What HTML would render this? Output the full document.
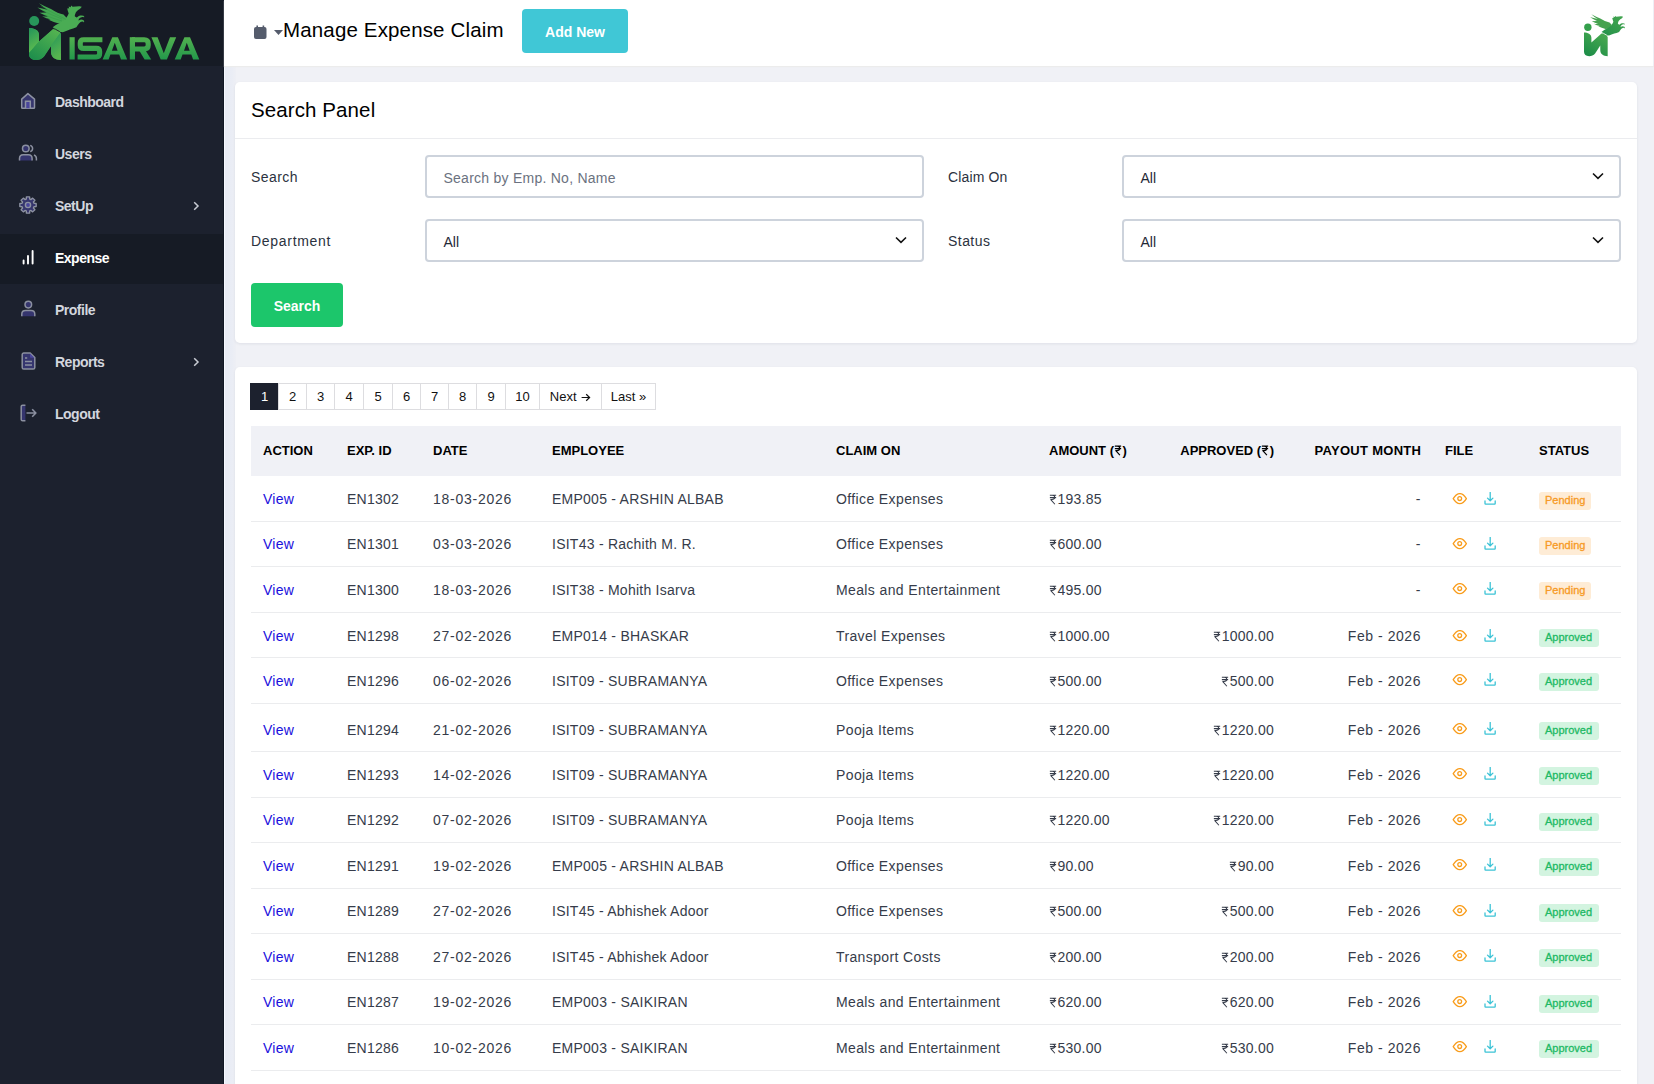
<!DOCTYPE html>
<html><head><meta charset="utf-8">
<style>
*{margin:0;padding:0;box-sizing:border-box}
html,body{width:1654px;height:1084px;overflow:hidden}
body{font-family:"Liberation Sans",sans-serif;background:#f0f1f6;position:relative;color:#374151}
.abs{position:absolute}
#side{position:absolute;left:0;top:0;width:224px;height:1084px;background:#1c212e}
#side .logo{position:absolute;left:0;top:0;width:224px;height:66px;background:#161b25}
#side .edge{position:absolute;left:223px;top:0;width:1px;height:1084px;background:#111724}
#wl{position:absolute;left:224px;top:0;width:1px;height:1084px;background:#f5f8fe}
#lg{position:absolute;left:225px;top:66px;width:11px;height:1018px;background:linear-gradient(90deg,#e8ebf5,#eaedf5 60%,#eeeff5)}
.mi{position:absolute;left:0;width:223px;height:50px;line-height:48px;color:#d3d6de;font-size:14px;font-weight:bold;letter-spacing:-0.5px}
.mi.act{background:#161b25;color:#fff}
.mi .t{position:absolute;left:55px;top:0}
.mi svg{position:absolute}
.mi .chev{position:absolute;left:192px;top:18px}
#hdr{position:absolute;left:224px;top:0;width:1430px;height:66px;background:#fff;box-shadow:0 1px 1px #ececec}
.card{position:absolute;left:235px;width:1402px;background:#fff;border-radius:5px;box-shadow:0 1px 3px rgba(30,35,60,0.08)}
.lbl{position:absolute;font-size:14px;color:#2b3240;letter-spacing:0.1px}
.inp{position:absolute;width:499px;height:43px;border:2px solid #cdd3dc;border-radius:4px;background:#fff}
.inp .v{position:absolute;left:16.5px;top:0;line-height:42px;font-size:14px;color:#1f2937}
.inp .ph{color:#6b7280;letter-spacing:0.25px}
.inp svg{position:absolute;left:468px;top:15px}
.btn{position:absolute;color:#fff;font-weight:bold;font-size:14px;text-align:center;border-radius:4px}
.pg{position:absolute;left:250px;top:383px;height:27px;display:flex}
.pg span{display:block;height:27px;line-height:25px;font-size:13px;color:#111;text-align:center;border:1px solid #dddde0;border-right:none;background:#fff}
.pg span:last-child{border-right:1px solid #dddde0}
.pg span.on{background:#1c212e;color:#fff;border-color:#1c212e}
#tbl{position:absolute;left:251px;top:426px;width:1370px;height:660px}
.th{position:absolute;left:0;top:0;width:1370px;height:50px;background:#f0f1f6}
.th span{position:absolute;top:0;line-height:50px;font-size:13px;font-weight:bold;color:#000;letter-spacing:0px}
.tr{position:absolute;left:0;width:1370px}
.sep{position:absolute;left:0;width:1370px;height:1px;background:#ebecee}
.tr .c.date{letter-spacing:0.75px}
.tr .c.pay{letter-spacing:0.55px}
.tr .c.claim{letter-spacing:0.38px}
.tr .c{position:absolute;top:0;font-size:14px;color:#363c4a;letter-spacing:0.25px;white-space:nowrap}
.tr .num{letter-spacing:0.25px}
.tr .view{color:#1a10dc}
.tr .r{text-align:right}
.inr{display:inline-block;vertical-align:-1px;margin-right:0.5px}
.ic{position:absolute;top:0;height:100%;display:flex;align-items:center}
.badge{position:absolute;left:1288px;top:50%;margin-top:-7px;height:18px;line-height:17px;padding:0 6px;font-size:11px;border-radius:3px;-webkit-text-stroke:0.3px currentColor}
.pend{background:#feecd6;color:#f79a25;width:52px}
.appr{background:#d3f4e0;color:#1db964;width:60px}
</style></head>
<body>
<div id="side">
  <div class="logo">
    <svg class="abs" style="left:0;top:0" width="224" height="66" viewBox="0 0 224 66">
      <defs>
        <linearGradient id="gS" x1="0" y1="0" x2="0" y2="1"><stop offset="0" stop-color="#3aa652"/><stop offset="1" stop-color="#2f9a4f"/></linearGradient>
        <linearGradient id="gL" x1="0" y1="0" x2="0.3" y2="1"><stop offset="0" stop-color="#22935a"/><stop offset="1" stop-color="#5fbd4f"/></linearGradient>
        <linearGradient id="gD" x1="0.9" y1="0" x2="0.2" y2="1"><stop offset="0" stop-color="#58b651"/><stop offset="1" stop-color="#1f8f4c"/></linearGradient>
        <linearGradient id="gR" x1="0" y1="0" x2="0.3" y2="1"><stop offset="0" stop-color="#22935a"/><stop offset="1" stop-color="#57b54f"/></linearGradient>
        <linearGradient id="gT" gradientUnits="userSpaceOnUse" x1="0" y1="37" x2="0" y2="60"><stop offset="0" stop-color="#52b04f"/><stop offset="1" stop-color="#22984b"/></linearGradient>
        <linearGradient id="gT2" gradientUnits="userSpaceOnUse" x1="0" y1="37" x2="0" y2="60"><stop offset="0" stop-color="#52b04f"/><stop offset="1" stop-color="#22984b"/></linearGradient>
      </defs>
      <g id="mk">
      <circle cx="34.2" cy="21" r="5" fill="#27965a"/>
      <path d="M29 28 C34 28 39 30 39 35 L39 41.5 L51.5 30.5 C53 28.8 54.5 28 56 28 C59 28 61 30.5 61 33.5 L61 60 C55 60 51 57 51 52 L51 45.5 L44 56.5 C42 59 39 60 36 60 C31.5 60 29 57.5 29 54 Z" fill="url(#gS)"/>
      <path d="M29 28 C34 28 39 30 39 35 L39 41.5 L29 53 Z" fill="url(#gL)"/>
      <path d="M29 53 L39 41.5 L51.5 30.5 C53 28.8 54.5 28 56 28 C58.5 28 60.3 29.6 60.9 32 L44 56.5 C42 59 39 60 36 60 C31.5 60 29 57.5 29 54 Z" fill="url(#gD)"/>
      <path d="M60.9 32 L61 60 C55 60 51 57 51 52 L51 45.5 Z" fill="url(#gR)"/>
      <path d="M66.8 18 L63.5 14.6 Q58 13.5 51 9 Q45 6.5 38.9 3.2 Q43 7 47.5 9.8 Q42 8.2 37.4 7.4 Q42 10.5 46.5 12.6 Q43 12.6 39.5 12.7 Q44 15 48 16.4 Q45 16.5 42.1 16.2 Q46.5 18.5 50.5 19.2 Q49.5 19.5 48 19.5 Q53 22 58 23.2 L61 23 Z" fill="#45a952"/>
      <path d="M52.7 27.2 Q56 24.5 60.4 22.4 L66.3 17.7 Q68 15.5 68.7 13.6 Q67.8 11 67.2 8.4 L69.2 8.2 L68.6 6.4 L70.6 7.2 L71.2 5.6 L72.6 6.8 Q74.5 6.4 76 6.4 L79 6.2 Q80.6 6.1 81.8 6.7 L80.6 8.3 Q79.4 9.3 78.1 10 Q76.6 11.2 75.8 12.4 Q74.8 14.5 74.8 16.2 Q75.5 17.2 76.8 17.5 Q78.5 16 80 15.6 Q82 15.3 83.4 15.7 Q84.6 16.3 84.2 17.3 Q83.5 16.8 82.2 16.9 Q80.8 17.2 79.8 18 Q78.5 19.3 78.4 20.6 Q79.8 19.7 81 19.4 Q82.6 19.6 83.6 20.3 Q84.6 21.3 84 22.5 Q83.4 21.7 82.2 21.5 Q80.5 21.8 79.2 23.2 Q77.6 25 76.4 27.2 Q73 28.5 69.9 29.5 Q66 31 62.8 32.2 Q60 31.8 58 30.7 Q55 28.8 52.7 27.2 Z" fill="#4aac54"/>
      <path d="M50.5 27.8 Q55.5 28.6 59.5 31.5 Q61 32.7 61.8 34" fill="none" style="stroke:var(--sep,#161b25)" stroke-width="0.9"/>
      <path d="M41 6 Q50 11.5 60 16.5 Q63.5 18 66 19.5 M42 10.5 Q52 15 62 19 M44 14.8 Q53 18.5 62 21" fill="none" stroke="#2b8a44" stroke-width="0.45" opacity="0.7"/>
    </g>
      <g fill="url(#gT)">
        <rect x="69.5" y="37.2" width="5.2" height="22.3"/>
        <path fill-rule="evenodd" d="M102.6 59.5 L112.3 37.2 H117.9 L127.2 59.5 H121.0 L119.2 54.6 H110.4 L108.6 59.5 Z M111.9 50.8 H117.6 L114.8 42.8 Z"/>
        <rect x="129.8" y="37.2" width="5.2" height="22.3"/>
        <path d="M151.4 37.2 H157.6 L163.8 53.2 L170 37.2 H176.2 L166.9 59.5 H160.7 Z"/>
        <path d="M139.2 50.6 H145.6 L151.2 59.5 H144.6 Z"/>
        <path fill-rule="evenodd" d="M174.7 59.5 L184.4 37.2 H190.0 L199.3 59.5 H193.1 L191.3 54.6 H182.5 L180.7 59.5 Z M184.0 50.8 H189.7 L186.8 42.8 Z"/>
      </g>
      <g fill="none" stroke="url(#gT2)" stroke-width="5.1">
        <path d="M102.4 39.75 H83.6 Q80.25 39.75 80.25 43 V45.2 Q80.25 48.4 83.6 48.4 H96.3 Q99.65 48.4 99.65 51.6 V53.6 Q99.65 56.95 96.3 56.95 H77.6"/>
        <path d="M132 39.75 H144.2 Q148.2 39.75 148.2 43.7 V45.3 Q148.2 49 144.2 49 H132"/>
      </g>
    </svg>
  </div>
  <div class="edge"></div>

  <div class="mi" style="top:78px">
    <svg style="left:19px;top:13px" width="19" height="19" viewBox="0 0 19 19"><path d="M2.7 8.1 L8.9 2.6 L15.5 8.1 V16.5 C15.5 17 15.2 17.3 14.7 17.3 H3.5 C3 17.3 2.7 17 2.7 16.5 Z" fill="#36366d" stroke="#8d92a2" stroke-width="1.5" stroke-linejoin="round"/><path d="M6.5 17.2 V10.3 H11.3 V17.2" fill="#4a469c" stroke="#8d92a2" stroke-width="1.5"/></svg>
    <span class="t">Dashboard</span></div>
  <div class="mi" style="top:130px">
    <svg style="left:18px;top:13px" width="20" height="20" viewBox="0 0 20 20"><circle cx="7.8" cy="5.5" r="3.3" fill="#35356e" stroke="#8b90a0" stroke-width="1.5"/><path d="M12.2 2.4 C13.8 2.9 14.6 4.1 14.6 5.5 C14.6 6.9 13.8 8.1 12.2 8.6" fill="none" stroke="#8b90a0" stroke-width="1.5"/><path d="M1.5 17.4 V15.5 C1.5 13.3 3 11.7 5.2 11.7 H10.4 C12.6 11.7 14.1 13.3 14.1 15.5 V17.4" fill="#35356e" stroke="#8b90a0" stroke-width="1.5"/><path d="M16 12 C17.5 12.6 18.4 14 18.4 15.6 V17.4" fill="none" stroke="#8b90a0" stroke-width="1.5"/></svg>
    <span class="t">Users</span></div>
  <div class="mi" style="top:182px">
    <svg style="left:18px;top:13px" width="20" height="20" viewBox="0 0 20 20"><path d="M15.96 8.29 L18.15 8.42 L18.15 11.58 L15.96 11.71 L15.42 13.01 L16.88 14.64 L14.64 16.88 L13.01 15.42 L11.71 15.96 L11.58 18.15 L8.42 18.15 L8.29 15.96 L6.99 15.42 L5.36 16.88 L3.12 14.64 L4.58 13.01 L4.04 11.71 L1.85 11.58 L1.85 8.42 L4.04 8.29 L4.58 6.99 L3.12 5.36 L5.36 3.12 L6.99 4.58 L8.29 4.04 L8.42 1.85 L11.58 1.85 L11.71 4.04 L13.01 4.58 L14.64 3.12 L16.88 5.36 L15.42 6.99 Z" fill="#36366d" stroke="#8d92a2" stroke-width="1.4" stroke-linejoin="round"/><circle cx="10" cy="10" r="2.6" fill="#4a469c" stroke="#8d92a2" stroke-width="1.4"/></svg>
    <span class="t">SetUp</span>
    <svg class="chev" width="8" height="12" viewBox="0 0 8 12"><path d="M2.2 2.3 L6 6 L2.2 9.7" fill="none" stroke="#c9ccd4" stroke-width="1.5"/></svg></div>
  <div class="mi act" style="top:234px">
    <svg style="left:20px;top:14px" width="18" height="18" viewBox="0 0 18 18"><path d="M3.6 12.4 V15.6 M8 7.9 V15.6 M12.6 3 V15.6" stroke="#fff" stroke-width="1.9" stroke-linecap="round"/></svg>
    <span class="t">Expense</span></div>
  <div class="mi" style="top:286px">
    <svg style="left:19px;top:13px" width="19" height="19" viewBox="0 0 19 19"><circle cx="9.3" cy="5.6" r="3.3" fill="#35356e" stroke="#8b90a0" stroke-width="1.5"/><path d="M2.8 17.3 V15.2 C2.8 13 4.4 11.6 6.6 11.6 H12 C14.2 11.6 15.8 13 15.8 15.2 V17.3" fill="#35356e" stroke="#8b90a0" stroke-width="1.5"/></svg>
    <span class="t">Profile</span></div>
  <div class="mi" style="top:338px">
    <svg style="left:19px;top:13px" width="19" height="20" viewBox="0 0 19 20"><path d="M3.2 3.6 C3.2 2.7 3.9 2 4.8 2 H11.2 L15.8 6.6 V16.4 C15.8 17.3 15.1 18 14.2 18 H4.8 C3.9 18 3.2 17.3 3.2 16.4 Z" fill="#35356e" stroke="#8b90a0" stroke-width="1.5" stroke-linejoin="round"/><path d="M6 7 H8.2 M6 10.6 H13 M6 13.9 H13" stroke="#8b90a0" stroke-width="1.5"/><path d="M11 2.5 L15.3 6.8 H12 C11.4 6.8 11 6.4 11 5.8Z" fill="#4b479e"/></svg>
    <span class="t">Reports</span>
    <svg class="chev" width="8" height="12" viewBox="0 0 8 12"><path d="M2.2 2.3 L6 6 L2.2 9.7" fill="none" stroke="#c9ccd4" stroke-width="1.5"/></svg></div>
  <div class="mi" style="top:390px">
    <svg style="left:19px;top:13px" width="20" height="20" viewBox="0 0 20 20"><path d="M6.4 2.2 H3.6 C2.8 2.2 2.2 2.8 2.2 3.6 V16.4 C2.2 17.2 2.8 17.8 3.6 17.8 H6.4" fill="#35356e" stroke="#8b90a0" stroke-width="1.5"/><path d="M7.5 10 H16.8 M13.2 6.3 L16.9 10 L13.2 13.7" fill="none" stroke="#8b90a0" stroke-width="1.6" stroke-linejoin="round"/></svg>
    <span class="t">Logout</span></div>
</div>

<div id="wl"></div>
<div id="lg"></div>
<div style="position:absolute;left:1653px;top:0;width:1px;height:66px;background:#eeeff5;z-index:5"></div>
<div id="hdr">
  <svg class="abs" style="left:30px;top:25px" width="13" height="14" viewBox="0 0 13 14"><path d="M3.2 0.5 V2.5 M9.4 0.5 V2.5" stroke="#555c6c" stroke-width="1.6"/><rect x="0" y="2" width="12.5" height="12" rx="2" fill="#555c6c"/><rect x="0" y="4.8" width="13" height="0.6" fill="#fff" opacity="0.0"/></svg>
  <svg class="abs" style="left:50px;top:30px" width="9" height="5" viewBox="0 0 9 5"><path d="M0 0 H9 L4.5 5 Z" fill="#555c6c"/></svg>
  <div class="abs" style="left:59px;top:18px;font-size:20.5px;line-height:24px;color:#000;letter-spacing:0.15px">Manage Expense Claim</div>
  <div class="btn" style="left:298px;top:9px;width:106px;height:44px;line-height:46px;background:#40c7d6">Add New</div>
  <svg class="abs" style="left:1330px;top:0" width="100" height="66" viewBox="1554 0 100 66">
    <defs>
      <linearGradient id="gH" x1="0.8" y1="0" x2="0.2" y2="1"><stop offset="0" stop-color="#4aaa50"/><stop offset="1" stop-color="#1d8d48"/></linearGradient>
      <linearGradient id="gP" x1="1" y1="0" x2="0" y2="1"><stop offset="0" stop-color="#45a650"/><stop offset="1" stop-color="#23914a"/></linearGradient>
    </defs>
    <g transform="translate(1584,14) scale(0.74) translate(-29,-3)">
      <circle cx="34.2" cy="21" r="5" fill="#34a04c"/>
      <path d="M29 28 C34 28 39 30 39 35 L39 41.5 L51.5 30.5 C53 28.8 54.5 28 56 28 C59 28 61 30.5 61 33.5 L61 60 C55 60 51 57 51 52 L51 45.5 L44 56.5 C42 59 39 60 36 60 C31.5 60 29 57.5 29 54 Z" fill="url(#gH)"/>
      <path d="M66.8 18 L63.5 14.6 Q58 13.5 51 9 Q45 6.5 38.9 3.2 Q43 7 47.5 9.8 Q42 8.2 37.4 7.4 Q42 10.5 46.5 12.6 Q43 12.6 39.5 12.7 Q44 15 48 16.4 Q45 16.5 42.1 16.2 Q46.5 18.5 50.5 19.2 Q49.5 19.5 48 19.5 Q53 22 58 23.2 L61 23 Z" fill="#45a24f"/>
      <path d="M52.7 27.2 Q56 24.5 60.4 22.4 L66.3 17.7 Q68 15.5 68.7 13.6 Q67.8 11 67.2 8.4 L69.2 8.2 L68.6 6.4 L70.6 7.2 L71.2 5.6 L72.6 6.8 Q74.5 6.4 76 6.4 L79 6.2 Q80.6 6.1 81.8 6.7 L80.6 8.3 Q79.4 9.3 78.1 10 Q76.6 11.2 75.8 12.4 Q74.8 14.5 74.8 16.2 Q75.5 17.2 76.8 17.5 Q78.5 16 80 15.6 Q82 15.3 83.4 15.7 Q84.6 16.3 84.2 17.3 Q83.5 16.8 82.2 16.9 Q80.8 17.2 79.8 18 Q78.5 19.3 78.4 20.6 Q79.8 19.7 81 19.4 Q82.6 19.6 83.6 20.3 Q84.6 21.3 84 22.5 Q83.4 21.7 82.2 21.5 Q80.5 21.8 79.2 23.2 Q77.6 25 76.4 27.2 Q73 28.5 69.9 29.5 Q66 31 62.8 32.2 Q60 31.8 58 30.7 Q55 28.8 52.7 27.2 Z" fill="url(#gP)"/>
      <path d="M50.5 27.8 Q55.5 28.6 59.5 31.5 Q61 32.7 61.8 34" fill="none" stroke="#fff" stroke-width="1.1"/>
    </g></svg>
</div>

<div class="card" style="top:82px;height:261px">
  <div class="abs" style="left:16px;top:16px;font-size:20.5px;line-height:24px;color:#000;letter-spacing:0.1px">Search Panel</div>
  <div class="abs" style="left:0;top:56px;width:1402px;height:1px;background:#ebecef"></div>
</div>
<div class="lbl" style="left:251px;top:169px;letter-spacing:0.45px">Search</div>
<div class="lbl" style="left:251px;top:233px;letter-spacing:0.70px">Department</div>
<div class="lbl" style="left:948px;top:169px;letter-spacing:0.15px">Claim On</div>
<div class="lbl" style="left:948px;top:233px;letter-spacing:0.45px">Status</div>
<div class="inp" style="left:425px;top:155px"><span class="v ph">Search by Emp. No, Name</span></div>
<div class="inp" style="left:425px;top:219px"><span class="v">All</span><svg width="12" height="8" viewBox="0 0 12 8"><path d="M1 1.5 L6 6.3 L11 1.5" fill="none" stroke="#111" stroke-width="1.6"/></svg></div>
<div class="inp" style="left:1122px;top:155px"><span class="v">All</span><svg width="12" height="8" viewBox="0 0 12 8"><path d="M1 1.5 L6 6.3 L11 1.5" fill="none" stroke="#111" stroke-width="1.6"/></svg></div>
<div class="inp" style="left:1122px;top:219px"><span class="v">All</span><svg width="12" height="8" viewBox="0 0 12 8"><path d="M1 1.5 L6 6.3 L11 1.5" fill="none" stroke="#111" stroke-width="1.6"/></svg></div>
<div class="btn" style="left:251px;top:283px;width:92px;height:44px;line-height:46px;background:#1cc66b">Search</div>

<div class="card" style="top:367px;height:760px"></div>
<div class="pg">
  <span class="on" style="width:28px">1</span><span style="width:28px">2</span><span style="width:28px">3</span><span style="width:29px">4</span><span style="width:29px">5</span><span style="width:28px">6</span><span style="width:28px">7</span><span style="width:28px">8</span><span style="width:29px">9</span><span style="width:34px">10</span><span style="width:62px">Next <svg width="10" height="9" viewBox="0 0 10 9" style="vertical-align:-0.5px;margin-left:1px"><path d="M0.6 4.5 H8.6 M5.2 1.2 L8.6 4.5 L5.2 7.8" fill="none" stroke="#111" stroke-width="1.2"/></svg></span><span style="width:55px">Last &#187;</span>
</div>

<div id="tbl">
  <div class="th">
    <span style="left:12px">ACTION</span>
    <span style="left:96px">EXP. ID</span>
    <span style="left:182px">DATE</span>
    <span style="left:301px">EMPLOYEE</span>
    <span style="left:585px">CLAIM ON</span>
    <span style="left:798px">AMOUNT (<svg class="inr" viewBox="0 0 10 14" width="8" height="11"><path d="M1 1.5H9M1 4.6H9M2.2 1.5H4.2C6.6 1.5 7.2 3 7.2 4.2C7.2 5.6 6.2 7.1 3.6 7.1H2.2L7.4 13" fill="none" stroke="currentColor" stroke-width="1.5" stroke-linecap="butt" stroke-linejoin="round"/></svg>)</span>
    <span style="right:347px">APPROVED (<svg class="inr" viewBox="0 0 10 14" width="8" height="11"><path d="M1 1.5H9M1 4.6H9M2.2 1.5H4.2C6.6 1.5 7.2 3 7.2 4.2C7.2 5.6 6.2 7.1 3.6 7.1H2.2L7.4 13" fill="none" stroke="currentColor" stroke-width="1.5" stroke-linecap="butt" stroke-linejoin="round"/></svg>)</span>
    <span style="right:200px;letter-spacing:0.3px;margin-right:-0.3px">PAYOUT MONTH</span>
    <span style="left:194px;left:1194px">FILE</span>
    <span style="left:1288px">STATUS</span>
  </div>
<div class="tr" style="top:50px;height:45px;line-height:47px"><span class="c view" style="left:12px">View</span><span class="c" style="left:96px">EN1302</span><span class="c date" style="left:182px">18-03-2026</span><span class="c" style="left:301px">EMP005 - ARSHIN ALBAB</span><span class="c claim" style="left:585px">Office Expenses</span><span class="c num" style="left:798px"><svg class="inr" viewBox="0 0 10 14" width="8" height="11"><path d="M1 1.5H9M1 4.6H9M2.2 1.5H4.2C6.6 1.5 7.2 3 7.2 4.2C7.2 5.6 6.2 7.1 3.6 7.1H2.2L7.4 13" fill="none" stroke="currentColor" stroke-width="1.3" stroke-linecap="butt" stroke-linejoin="round"/></svg>193.85</span><span class="c r pay" style="right:200px">-</span><span class="ic" style="left:1201px"><svg class="eye" viewBox="0 0.6 16 12" width="16" height="12"><path d="M1.2 6.2 C3.5 2.5 5.6 1.2 7.8 1.2 C10 1.2 12.2 2.5 14.4 6.2 C12.2 9.9 10 11.2 7.8 11.2 C5.6 11.2 3.5 9.9 1.2 6.2 Z" fill="none" stroke="#f99d1c" stroke-width="1.3" stroke-linejoin="round"/><circle cx="7.7" cy="6.2" r="1.9" fill="none" stroke="#f99d1c" stroke-width="1.3"/></svg></span><span class="ic" style="left:1232px"><svg class="dl" viewBox="0 0.7 14 14" width="14" height="14"><path d="M7.2 1 V9.4 M4.5 6.8 L7.2 9.5 L9.9 6.8" fill="none" stroke="#3cc3d6" stroke-width="1.3" stroke-linecap="round" stroke-linejoin="round"/><path d="M2 9.6 V12.2 Q2 12.8 2.6 12.8 H11.6 Q12.2 12.8 12.2 12.2 V9.6" fill="none" stroke="#3cc3d6" stroke-width="1.3" stroke-linecap="round"/></svg></span><span class="badge pend">Pending</span></div><div class="sep" style="top:95px"></div>
<div class="tr" style="top:95px;height:45px;line-height:47px"><span class="c view" style="left:12px">View</span><span class="c" style="left:96px">EN1301</span><span class="c date" style="left:182px">03-03-2026</span><span class="c" style="left:301px">ISIT43 - Rachith M. R.</span><span class="c claim" style="left:585px">Office Expenses</span><span class="c num" style="left:798px"><svg class="inr" viewBox="0 0 10 14" width="8" height="11"><path d="M1 1.5H9M1 4.6H9M2.2 1.5H4.2C6.6 1.5 7.2 3 7.2 4.2C7.2 5.6 6.2 7.1 3.6 7.1H2.2L7.4 13" fill="none" stroke="currentColor" stroke-width="1.3" stroke-linecap="butt" stroke-linejoin="round"/></svg>600.00</span><span class="c r pay" style="right:200px">-</span><span class="ic" style="left:1201px"><svg class="eye" viewBox="0 0.6 16 12" width="16" height="12"><path d="M1.2 6.2 C3.5 2.5 5.6 1.2 7.8 1.2 C10 1.2 12.2 2.5 14.4 6.2 C12.2 9.9 10 11.2 7.8 11.2 C5.6 11.2 3.5 9.9 1.2 6.2 Z" fill="none" stroke="#f99d1c" stroke-width="1.3" stroke-linejoin="round"/><circle cx="7.7" cy="6.2" r="1.9" fill="none" stroke="#f99d1c" stroke-width="1.3"/></svg></span><span class="ic" style="left:1232px"><svg class="dl" viewBox="0 0.7 14 14" width="14" height="14"><path d="M7.2 1 V9.4 M4.5 6.8 L7.2 9.5 L9.9 6.8" fill="none" stroke="#3cc3d6" stroke-width="1.3" stroke-linecap="round" stroke-linejoin="round"/><path d="M2 9.6 V12.2 Q2 12.8 2.6 12.8 H11.6 Q12.2 12.8 12.2 12.2 V9.6" fill="none" stroke="#3cc3d6" stroke-width="1.3" stroke-linecap="round"/></svg></span><span class="badge pend">Pending</span></div><div class="sep" style="top:140px"></div>
<div class="tr" style="top:140px;height:46px;line-height:48px"><span class="c view" style="left:12px">View</span><span class="c" style="left:96px">EN1300</span><span class="c date" style="left:182px">18-03-2026</span><span class="c" style="left:301px">ISIT38 - Mohith Isarva</span><span class="c claim" style="left:585px">Meals and Entertainment</span><span class="c num" style="left:798px"><svg class="inr" viewBox="0 0 10 14" width="8" height="11"><path d="M1 1.5H9M1 4.6H9M2.2 1.5H4.2C6.6 1.5 7.2 3 7.2 4.2C7.2 5.6 6.2 7.1 3.6 7.1H2.2L7.4 13" fill="none" stroke="currentColor" stroke-width="1.3" stroke-linecap="butt" stroke-linejoin="round"/></svg>495.00</span><span class="c r pay" style="right:200px">-</span><span class="ic" style="left:1201px"><svg class="eye" viewBox="0 0.6 16 12" width="16" height="12"><path d="M1.2 6.2 C3.5 2.5 5.6 1.2 7.8 1.2 C10 1.2 12.2 2.5 14.4 6.2 C12.2 9.9 10 11.2 7.8 11.2 C5.6 11.2 3.5 9.9 1.2 6.2 Z" fill="none" stroke="#f99d1c" stroke-width="1.3" stroke-linejoin="round"/><circle cx="7.7" cy="6.2" r="1.9" fill="none" stroke="#f99d1c" stroke-width="1.3"/></svg></span><span class="ic" style="left:1232px"><svg class="dl" viewBox="0 0.7 14 14" width="14" height="14"><path d="M7.2 1 V9.4 M4.5 6.8 L7.2 9.5 L9.9 6.8" fill="none" stroke="#3cc3d6" stroke-width="1.3" stroke-linecap="round" stroke-linejoin="round"/><path d="M2 9.6 V12.2 Q2 12.8 2.6 12.8 H11.6 Q12.2 12.8 12.2 12.2 V9.6" fill="none" stroke="#3cc3d6" stroke-width="1.3" stroke-linecap="round"/></svg></span><span class="badge pend">Pending</span></div><div class="sep" style="top:186px"></div>
<div class="tr" style="top:187px;height:45px;line-height:47px"><span class="c view" style="left:12px">View</span><span class="c" style="left:96px">EN1298</span><span class="c date" style="left:182px">27-02-2026</span><span class="c" style="left:301px">EMP014 - BHASKAR</span><span class="c claim" style="left:585px">Travel Expenses</span><span class="c num" style="left:798px"><svg class="inr" viewBox="0 0 10 14" width="8" height="11"><path d="M1 1.5H9M1 4.6H9M2.2 1.5H4.2C6.6 1.5 7.2 3 7.2 4.2C7.2 5.6 6.2 7.1 3.6 7.1H2.2L7.4 13" fill="none" stroke="currentColor" stroke-width="1.3" stroke-linecap="butt" stroke-linejoin="round"/></svg>1000.00</span><span class="c num r" style="right:347px"><svg class="inr" viewBox="0 0 10 14" width="8" height="11"><path d="M1 1.5H9M1 4.6H9M2.2 1.5H4.2C6.6 1.5 7.2 3 7.2 4.2C7.2 5.6 6.2 7.1 3.6 7.1H2.2L7.4 13" fill="none" stroke="currentColor" stroke-width="1.3" stroke-linecap="butt" stroke-linejoin="round"/></svg>1000.00</span><span class="c r pay" style="right:200px">Feb - 2026</span><span class="ic" style="left:1201px"><svg class="eye" viewBox="0 0.6 16 12" width="16" height="12"><path d="M1.2 6.2 C3.5 2.5 5.6 1.2 7.8 1.2 C10 1.2 12.2 2.5 14.4 6.2 C12.2 9.9 10 11.2 7.8 11.2 C5.6 11.2 3.5 9.9 1.2 6.2 Z" fill="none" stroke="#f99d1c" stroke-width="1.3" stroke-linejoin="round"/><circle cx="7.7" cy="6.2" r="1.9" fill="none" stroke="#f99d1c" stroke-width="1.3"/></svg></span><span class="ic" style="left:1232px"><svg class="dl" viewBox="0 0.7 14 14" width="14" height="14"><path d="M7.2 1 V9.4 M4.5 6.8 L7.2 9.5 L9.9 6.8" fill="none" stroke="#3cc3d6" stroke-width="1.3" stroke-linecap="round" stroke-linejoin="round"/><path d="M2 9.6 V12.2 Q2 12.8 2.6 12.8 H11.6 Q12.2 12.8 12.2 12.2 V9.6" fill="none" stroke="#3cc3d6" stroke-width="1.3" stroke-linecap="round"/></svg></span><span class="badge appr">Approved</span></div><div class="sep" style="top:231px"></div>
<div class="tr" style="top:231px;height:46px;line-height:48px"><span class="c view" style="left:12px">View</span><span class="c" style="left:96px">EN1296</span><span class="c date" style="left:182px">06-02-2026</span><span class="c" style="left:301px">ISIT09 - SUBRAMANYA</span><span class="c claim" style="left:585px">Office Expenses</span><span class="c num" style="left:798px"><svg class="inr" viewBox="0 0 10 14" width="8" height="11"><path d="M1 1.5H9M1 4.6H9M2.2 1.5H4.2C6.6 1.5 7.2 3 7.2 4.2C7.2 5.6 6.2 7.1 3.6 7.1H2.2L7.4 13" fill="none" stroke="currentColor" stroke-width="1.3" stroke-linecap="butt" stroke-linejoin="round"/></svg>500.00</span><span class="c num r" style="right:347px"><svg class="inr" viewBox="0 0 10 14" width="8" height="11"><path d="M1 1.5H9M1 4.6H9M2.2 1.5H4.2C6.6 1.5 7.2 3 7.2 4.2C7.2 5.6 6.2 7.1 3.6 7.1H2.2L7.4 13" fill="none" stroke="currentColor" stroke-width="1.3" stroke-linecap="butt" stroke-linejoin="round"/></svg>500.00</span><span class="c r pay" style="right:200px">Feb - 2026</span><span class="ic" style="left:1201px"><svg class="eye" viewBox="0 0.6 16 12" width="16" height="12"><path d="M1.2 6.2 C3.5 2.5 5.6 1.2 7.8 1.2 C10 1.2 12.2 2.5 14.4 6.2 C12.2 9.9 10 11.2 7.8 11.2 C5.6 11.2 3.5 9.9 1.2 6.2 Z" fill="none" stroke="#f99d1c" stroke-width="1.3" stroke-linejoin="round"/><circle cx="7.7" cy="6.2" r="1.9" fill="none" stroke="#f99d1c" stroke-width="1.3"/></svg></span><span class="ic" style="left:1232px"><svg class="dl" viewBox="0 0.7 14 14" width="14" height="14"><path d="M7.2 1 V9.4 M4.5 6.8 L7.2 9.5 L9.9 6.8" fill="none" stroke="#3cc3d6" stroke-width="1.3" stroke-linecap="round" stroke-linejoin="round"/><path d="M2 9.6 V12.2 Q2 12.8 2.6 12.8 H11.6 Q12.2 12.8 12.2 12.2 V9.6" fill="none" stroke="#3cc3d6" stroke-width="1.3" stroke-linecap="round"/></svg></span><span class="badge appr">Approved</span></div><div class="sep" style="top:277px"></div>
<div class="tr" style="top:279px;height:48px;line-height:50px"><span class="c view" style="left:12px">View</span><span class="c" style="left:96px">EN1294</span><span class="c date" style="left:182px">21-02-2026</span><span class="c" style="left:301px">ISIT09 - SUBRAMANYA</span><span class="c claim" style="left:585px">Pooja Items</span><span class="c num" style="left:798px"><svg class="inr" viewBox="0 0 10 14" width="8" height="11"><path d="M1 1.5H9M1 4.6H9M2.2 1.5H4.2C6.6 1.5 7.2 3 7.2 4.2C7.2 5.6 6.2 7.1 3.6 7.1H2.2L7.4 13" fill="none" stroke="currentColor" stroke-width="1.3" stroke-linecap="butt" stroke-linejoin="round"/></svg>1220.00</span><span class="c num r" style="right:347px"><svg class="inr" viewBox="0 0 10 14" width="8" height="11"><path d="M1 1.5H9M1 4.6H9M2.2 1.5H4.2C6.6 1.5 7.2 3 7.2 4.2C7.2 5.6 6.2 7.1 3.6 7.1H2.2L7.4 13" fill="none" stroke="currentColor" stroke-width="1.3" stroke-linecap="butt" stroke-linejoin="round"/></svg>1220.00</span><span class="c r pay" style="right:200px">Feb - 2026</span><span class="ic" style="left:1201px"><svg class="eye" viewBox="0 0.6 16 12" width="16" height="12"><path d="M1.2 6.2 C3.5 2.5 5.6 1.2 7.8 1.2 C10 1.2 12.2 2.5 14.4 6.2 C12.2 9.9 10 11.2 7.8 11.2 C5.6 11.2 3.5 9.9 1.2 6.2 Z" fill="none" stroke="#f99d1c" stroke-width="1.3" stroke-linejoin="round"/><circle cx="7.7" cy="6.2" r="1.9" fill="none" stroke="#f99d1c" stroke-width="1.3"/></svg></span><span class="ic" style="left:1232px"><svg class="dl" viewBox="0 0.7 14 14" width="14" height="14"><path d="M7.2 1 V9.4 M4.5 6.8 L7.2 9.5 L9.9 6.8" fill="none" stroke="#3cc3d6" stroke-width="1.3" stroke-linecap="round" stroke-linejoin="round"/><path d="M2 9.6 V12.2 Q2 12.8 2.6 12.8 H11.6 Q12.2 12.8 12.2 12.2 V9.6" fill="none" stroke="#3cc3d6" stroke-width="1.3" stroke-linecap="round"/></svg></span><span class="badge appr">Approved</span></div><div class="sep" style="top:325px"></div>
<div class="tr" style="top:325px;height:46px;line-height:48px"><span class="c view" style="left:12px">View</span><span class="c" style="left:96px">EN1293</span><span class="c date" style="left:182px">14-02-2026</span><span class="c" style="left:301px">ISIT09 - SUBRAMANYA</span><span class="c claim" style="left:585px">Pooja Items</span><span class="c num" style="left:798px"><svg class="inr" viewBox="0 0 10 14" width="8" height="11"><path d="M1 1.5H9M1 4.6H9M2.2 1.5H4.2C6.6 1.5 7.2 3 7.2 4.2C7.2 5.6 6.2 7.1 3.6 7.1H2.2L7.4 13" fill="none" stroke="currentColor" stroke-width="1.3" stroke-linecap="butt" stroke-linejoin="round"/></svg>1220.00</span><span class="c num r" style="right:347px"><svg class="inr" viewBox="0 0 10 14" width="8" height="11"><path d="M1 1.5H9M1 4.6H9M2.2 1.5H4.2C6.6 1.5 7.2 3 7.2 4.2C7.2 5.6 6.2 7.1 3.6 7.1H2.2L7.4 13" fill="none" stroke="currentColor" stroke-width="1.3" stroke-linecap="butt" stroke-linejoin="round"/></svg>1220.00</span><span class="c r pay" style="right:200px">Feb - 2026</span><span class="ic" style="left:1201px"><svg class="eye" viewBox="0 0.6 16 12" width="16" height="12"><path d="M1.2 6.2 C3.5 2.5 5.6 1.2 7.8 1.2 C10 1.2 12.2 2.5 14.4 6.2 C12.2 9.9 10 11.2 7.8 11.2 C5.6 11.2 3.5 9.9 1.2 6.2 Z" fill="none" stroke="#f99d1c" stroke-width="1.3" stroke-linejoin="round"/><circle cx="7.7" cy="6.2" r="1.9" fill="none" stroke="#f99d1c" stroke-width="1.3"/></svg></span><span class="ic" style="left:1232px"><svg class="dl" viewBox="0 0.7 14 14" width="14" height="14"><path d="M7.2 1 V9.4 M4.5 6.8 L7.2 9.5 L9.9 6.8" fill="none" stroke="#3cc3d6" stroke-width="1.3" stroke-linecap="round" stroke-linejoin="round"/><path d="M2 9.6 V12.2 Q2 12.8 2.6 12.8 H11.6 Q12.2 12.8 12.2 12.2 V9.6" fill="none" stroke="#3cc3d6" stroke-width="1.3" stroke-linecap="round"/></svg></span><span class="badge appr">Approved</span></div><div class="sep" style="top:371px"></div>
<div class="tr" style="top:371px;height:45px;line-height:47px"><span class="c view" style="left:12px">View</span><span class="c" style="left:96px">EN1292</span><span class="c date" style="left:182px">07-02-2026</span><span class="c" style="left:301px">ISIT09 - SUBRAMANYA</span><span class="c claim" style="left:585px">Pooja Items</span><span class="c num" style="left:798px"><svg class="inr" viewBox="0 0 10 14" width="8" height="11"><path d="M1 1.5H9M1 4.6H9M2.2 1.5H4.2C6.6 1.5 7.2 3 7.2 4.2C7.2 5.6 6.2 7.1 3.6 7.1H2.2L7.4 13" fill="none" stroke="currentColor" stroke-width="1.3" stroke-linecap="butt" stroke-linejoin="round"/></svg>1220.00</span><span class="c num r" style="right:347px"><svg class="inr" viewBox="0 0 10 14" width="8" height="11"><path d="M1 1.5H9M1 4.6H9M2.2 1.5H4.2C6.6 1.5 7.2 3 7.2 4.2C7.2 5.6 6.2 7.1 3.6 7.1H2.2L7.4 13" fill="none" stroke="currentColor" stroke-width="1.3" stroke-linecap="butt" stroke-linejoin="round"/></svg>1220.00</span><span class="c r pay" style="right:200px">Feb - 2026</span><span class="ic" style="left:1201px"><svg class="eye" viewBox="0 0.6 16 12" width="16" height="12"><path d="M1.2 6.2 C3.5 2.5 5.6 1.2 7.8 1.2 C10 1.2 12.2 2.5 14.4 6.2 C12.2 9.9 10 11.2 7.8 11.2 C5.6 11.2 3.5 9.9 1.2 6.2 Z" fill="none" stroke="#f99d1c" stroke-width="1.3" stroke-linejoin="round"/><circle cx="7.7" cy="6.2" r="1.9" fill="none" stroke="#f99d1c" stroke-width="1.3"/></svg></span><span class="ic" style="left:1232px"><svg class="dl" viewBox="0 0.7 14 14" width="14" height="14"><path d="M7.2 1 V9.4 M4.5 6.8 L7.2 9.5 L9.9 6.8" fill="none" stroke="#3cc3d6" stroke-width="1.3" stroke-linecap="round" stroke-linejoin="round"/><path d="M2 9.6 V12.2 Q2 12.8 2.6 12.8 H11.6 Q12.2 12.8 12.2 12.2 V9.6" fill="none" stroke="#3cc3d6" stroke-width="1.3" stroke-linecap="round"/></svg></span><span class="badge appr">Approved</span></div><div class="sep" style="top:416px"></div>
<div class="tr" style="top:416px;height:46px;line-height:48px"><span class="c view" style="left:12px">View</span><span class="c" style="left:96px">EN1291</span><span class="c date" style="left:182px">19-02-2026</span><span class="c" style="left:301px">EMP005 - ARSHIN ALBAB</span><span class="c claim" style="left:585px">Office Expenses</span><span class="c num" style="left:798px"><svg class="inr" viewBox="0 0 10 14" width="8" height="11"><path d="M1 1.5H9M1 4.6H9M2.2 1.5H4.2C6.6 1.5 7.2 3 7.2 4.2C7.2 5.6 6.2 7.1 3.6 7.1H2.2L7.4 13" fill="none" stroke="currentColor" stroke-width="1.3" stroke-linecap="butt" stroke-linejoin="round"/></svg>90.00</span><span class="c num r" style="right:347px"><svg class="inr" viewBox="0 0 10 14" width="8" height="11"><path d="M1 1.5H9M1 4.6H9M2.2 1.5H4.2C6.6 1.5 7.2 3 7.2 4.2C7.2 5.6 6.2 7.1 3.6 7.1H2.2L7.4 13" fill="none" stroke="currentColor" stroke-width="1.3" stroke-linecap="butt" stroke-linejoin="round"/></svg>90.00</span><span class="c r pay" style="right:200px">Feb - 2026</span><span class="ic" style="left:1201px"><svg class="eye" viewBox="0 0.6 16 12" width="16" height="12"><path d="M1.2 6.2 C3.5 2.5 5.6 1.2 7.8 1.2 C10 1.2 12.2 2.5 14.4 6.2 C12.2 9.9 10 11.2 7.8 11.2 C5.6 11.2 3.5 9.9 1.2 6.2 Z" fill="none" stroke="#f99d1c" stroke-width="1.3" stroke-linejoin="round"/><circle cx="7.7" cy="6.2" r="1.9" fill="none" stroke="#f99d1c" stroke-width="1.3"/></svg></span><span class="ic" style="left:1232px"><svg class="dl" viewBox="0 0.7 14 14" width="14" height="14"><path d="M7.2 1 V9.4 M4.5 6.8 L7.2 9.5 L9.9 6.8" fill="none" stroke="#3cc3d6" stroke-width="1.3" stroke-linecap="round" stroke-linejoin="round"/><path d="M2 9.6 V12.2 Q2 12.8 2.6 12.8 H11.6 Q12.2 12.8 12.2 12.2 V9.6" fill="none" stroke="#3cc3d6" stroke-width="1.3" stroke-linecap="round"/></svg></span><span class="badge appr">Approved</span></div><div class="sep" style="top:462px"></div>
<div class="tr" style="top:462px;height:45px;line-height:47px"><span class="c view" style="left:12px">View</span><span class="c" style="left:96px">EN1289</span><span class="c date" style="left:182px">27-02-2026</span><span class="c" style="left:301px">ISIT45 - Abhishek Adoor</span><span class="c claim" style="left:585px">Office Expenses</span><span class="c num" style="left:798px"><svg class="inr" viewBox="0 0 10 14" width="8" height="11"><path d="M1 1.5H9M1 4.6H9M2.2 1.5H4.2C6.6 1.5 7.2 3 7.2 4.2C7.2 5.6 6.2 7.1 3.6 7.1H2.2L7.4 13" fill="none" stroke="currentColor" stroke-width="1.3" stroke-linecap="butt" stroke-linejoin="round"/></svg>500.00</span><span class="c num r" style="right:347px"><svg class="inr" viewBox="0 0 10 14" width="8" height="11"><path d="M1 1.5H9M1 4.6H9M2.2 1.5H4.2C6.6 1.5 7.2 3 7.2 4.2C7.2 5.6 6.2 7.1 3.6 7.1H2.2L7.4 13" fill="none" stroke="currentColor" stroke-width="1.3" stroke-linecap="butt" stroke-linejoin="round"/></svg>500.00</span><span class="c r pay" style="right:200px">Feb - 2026</span><span class="ic" style="left:1201px"><svg class="eye" viewBox="0 0.6 16 12" width="16" height="12"><path d="M1.2 6.2 C3.5 2.5 5.6 1.2 7.8 1.2 C10 1.2 12.2 2.5 14.4 6.2 C12.2 9.9 10 11.2 7.8 11.2 C5.6 11.2 3.5 9.9 1.2 6.2 Z" fill="none" stroke="#f99d1c" stroke-width="1.3" stroke-linejoin="round"/><circle cx="7.7" cy="6.2" r="1.9" fill="none" stroke="#f99d1c" stroke-width="1.3"/></svg></span><span class="ic" style="left:1232px"><svg class="dl" viewBox="0 0.7 14 14" width="14" height="14"><path d="M7.2 1 V9.4 M4.5 6.8 L7.2 9.5 L9.9 6.8" fill="none" stroke="#3cc3d6" stroke-width="1.3" stroke-linecap="round" stroke-linejoin="round"/><path d="M2 9.6 V12.2 Q2 12.8 2.6 12.8 H11.6 Q12.2 12.8 12.2 12.2 V9.6" fill="none" stroke="#3cc3d6" stroke-width="1.3" stroke-linecap="round"/></svg></span><span class="badge appr">Approved</span></div><div class="sep" style="top:507px"></div>
<div class="tr" style="top:507px;height:46px;line-height:48px"><span class="c view" style="left:12px">View</span><span class="c" style="left:96px">EN1288</span><span class="c date" style="left:182px">27-02-2026</span><span class="c" style="left:301px">ISIT45 - Abhishek Adoor</span><span class="c claim" style="left:585px">Transport Costs</span><span class="c num" style="left:798px"><svg class="inr" viewBox="0 0 10 14" width="8" height="11"><path d="M1 1.5H9M1 4.6H9M2.2 1.5H4.2C6.6 1.5 7.2 3 7.2 4.2C7.2 5.6 6.2 7.1 3.6 7.1H2.2L7.4 13" fill="none" stroke="currentColor" stroke-width="1.3" stroke-linecap="butt" stroke-linejoin="round"/></svg>200.00</span><span class="c num r" style="right:347px"><svg class="inr" viewBox="0 0 10 14" width="8" height="11"><path d="M1 1.5H9M1 4.6H9M2.2 1.5H4.2C6.6 1.5 7.2 3 7.2 4.2C7.2 5.6 6.2 7.1 3.6 7.1H2.2L7.4 13" fill="none" stroke="currentColor" stroke-width="1.3" stroke-linecap="butt" stroke-linejoin="round"/></svg>200.00</span><span class="c r pay" style="right:200px">Feb - 2026</span><span class="ic" style="left:1201px"><svg class="eye" viewBox="0 0.6 16 12" width="16" height="12"><path d="M1.2 6.2 C3.5 2.5 5.6 1.2 7.8 1.2 C10 1.2 12.2 2.5 14.4 6.2 C12.2 9.9 10 11.2 7.8 11.2 C5.6 11.2 3.5 9.9 1.2 6.2 Z" fill="none" stroke="#f99d1c" stroke-width="1.3" stroke-linejoin="round"/><circle cx="7.7" cy="6.2" r="1.9" fill="none" stroke="#f99d1c" stroke-width="1.3"/></svg></span><span class="ic" style="left:1232px"><svg class="dl" viewBox="0 0.7 14 14" width="14" height="14"><path d="M7.2 1 V9.4 M4.5 6.8 L7.2 9.5 L9.9 6.8" fill="none" stroke="#3cc3d6" stroke-width="1.3" stroke-linecap="round" stroke-linejoin="round"/><path d="M2 9.6 V12.2 Q2 12.8 2.6 12.8 H11.6 Q12.2 12.8 12.2 12.2 V9.6" fill="none" stroke="#3cc3d6" stroke-width="1.3" stroke-linecap="round"/></svg></span><span class="badge appr">Approved</span></div><div class="sep" style="top:553px"></div>
<div class="tr" style="top:553px;height:45px;line-height:47px"><span class="c view" style="left:12px">View</span><span class="c" style="left:96px">EN1287</span><span class="c date" style="left:182px">19-02-2026</span><span class="c" style="left:301px">EMP003 - SAIKIRAN</span><span class="c claim" style="left:585px">Meals and Entertainment</span><span class="c num" style="left:798px"><svg class="inr" viewBox="0 0 10 14" width="8" height="11"><path d="M1 1.5H9M1 4.6H9M2.2 1.5H4.2C6.6 1.5 7.2 3 7.2 4.2C7.2 5.6 6.2 7.1 3.6 7.1H2.2L7.4 13" fill="none" stroke="currentColor" stroke-width="1.3" stroke-linecap="butt" stroke-linejoin="round"/></svg>620.00</span><span class="c num r" style="right:347px"><svg class="inr" viewBox="0 0 10 14" width="8" height="11"><path d="M1 1.5H9M1 4.6H9M2.2 1.5H4.2C6.6 1.5 7.2 3 7.2 4.2C7.2 5.6 6.2 7.1 3.6 7.1H2.2L7.4 13" fill="none" stroke="currentColor" stroke-width="1.3" stroke-linecap="butt" stroke-linejoin="round"/></svg>620.00</span><span class="c r pay" style="right:200px">Feb - 2026</span><span class="ic" style="left:1201px"><svg class="eye" viewBox="0 0.6 16 12" width="16" height="12"><path d="M1.2 6.2 C3.5 2.5 5.6 1.2 7.8 1.2 C10 1.2 12.2 2.5 14.4 6.2 C12.2 9.9 10 11.2 7.8 11.2 C5.6 11.2 3.5 9.9 1.2 6.2 Z" fill="none" stroke="#f99d1c" stroke-width="1.3" stroke-linejoin="round"/><circle cx="7.7" cy="6.2" r="1.9" fill="none" stroke="#f99d1c" stroke-width="1.3"/></svg></span><span class="ic" style="left:1232px"><svg class="dl" viewBox="0 0.7 14 14" width="14" height="14"><path d="M7.2 1 V9.4 M4.5 6.8 L7.2 9.5 L9.9 6.8" fill="none" stroke="#3cc3d6" stroke-width="1.3" stroke-linecap="round" stroke-linejoin="round"/><path d="M2 9.6 V12.2 Q2 12.8 2.6 12.8 H11.6 Q12.2 12.8 12.2 12.2 V9.6" fill="none" stroke="#3cc3d6" stroke-width="1.3" stroke-linecap="round"/></svg></span><span class="badge appr">Approved</span></div><div class="sep" style="top:598px"></div>
<div class="tr" style="top:598px;height:46px;line-height:48px"><span class="c view" style="left:12px">View</span><span class="c" style="left:96px">EN1286</span><span class="c date" style="left:182px">10-02-2026</span><span class="c" style="left:301px">EMP003 - SAIKIRAN</span><span class="c claim" style="left:585px">Meals and Entertainment</span><span class="c num" style="left:798px"><svg class="inr" viewBox="0 0 10 14" width="8" height="11"><path d="M1 1.5H9M1 4.6H9M2.2 1.5H4.2C6.6 1.5 7.2 3 7.2 4.2C7.2 5.6 6.2 7.1 3.6 7.1H2.2L7.4 13" fill="none" stroke="currentColor" stroke-width="1.3" stroke-linecap="butt" stroke-linejoin="round"/></svg>530.00</span><span class="c num r" style="right:347px"><svg class="inr" viewBox="0 0 10 14" width="8" height="11"><path d="M1 1.5H9M1 4.6H9M2.2 1.5H4.2C6.6 1.5 7.2 3 7.2 4.2C7.2 5.6 6.2 7.1 3.6 7.1H2.2L7.4 13" fill="none" stroke="currentColor" stroke-width="1.3" stroke-linecap="butt" stroke-linejoin="round"/></svg>530.00</span><span class="c r pay" style="right:200px">Feb - 2026</span><span class="ic" style="left:1201px"><svg class="eye" viewBox="0 0.6 16 12" width="16" height="12"><path d="M1.2 6.2 C3.5 2.5 5.6 1.2 7.8 1.2 C10 1.2 12.2 2.5 14.4 6.2 C12.2 9.9 10 11.2 7.8 11.2 C5.6 11.2 3.5 9.9 1.2 6.2 Z" fill="none" stroke="#f99d1c" stroke-width="1.3" stroke-linejoin="round"/><circle cx="7.7" cy="6.2" r="1.9" fill="none" stroke="#f99d1c" stroke-width="1.3"/></svg></span><span class="ic" style="left:1232px"><svg class="dl" viewBox="0 0.7 14 14" width="14" height="14"><path d="M7.2 1 V9.4 M4.5 6.8 L7.2 9.5 L9.9 6.8" fill="none" stroke="#3cc3d6" stroke-width="1.3" stroke-linecap="round" stroke-linejoin="round"/><path d="M2 9.6 V12.2 Q2 12.8 2.6 12.8 H11.6 Q12.2 12.8 12.2 12.2 V9.6" fill="none" stroke="#3cc3d6" stroke-width="1.3" stroke-linecap="round"/></svg></span><span class="badge appr">Approved</span></div><div class="sep" style="top:644px"></div>
</div>
</body></html>
